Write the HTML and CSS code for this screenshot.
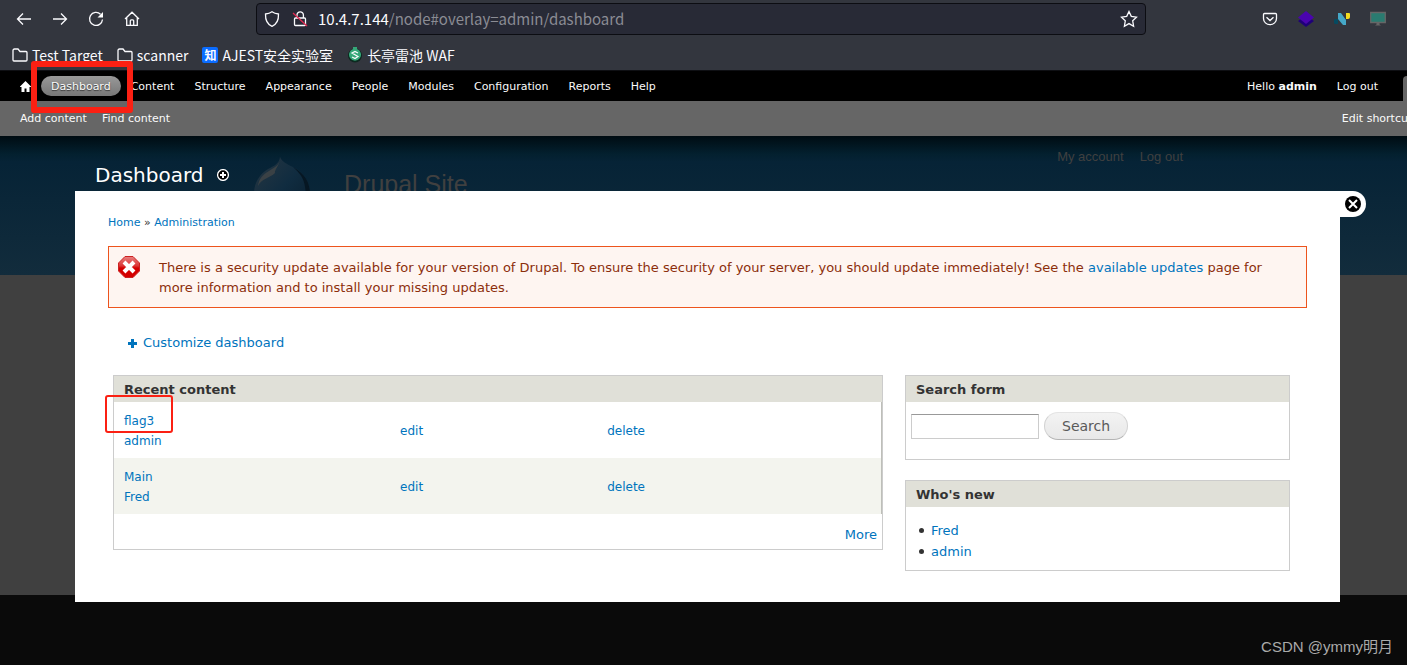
FILE: index.html
```
<!DOCTYPE html>
<html lang="en">
  <head>
    <meta charset="UTF-8" />
    <meta name="viewport" content="width=device-width, initial-scale=1.0" />
    <title>Dashboard | Drupal Site</title>
    <link rel="stylesheet" href="styles.css">
  </head>
  <body>
    <!-- browser -->
    <header class="browser">
      <div class="nav-bar">
        <div class="nav-buttons">
          <button aria-label="Back"><svg width="16" height="16" viewBox="0 0 16 16"><path d="M15 8H1.500M7 2.500L1.500 8l5.500 5.500" /></svg></button>
          <button aria-label="Forward"><svg width="16" height="16" viewBox="0 0 16 16"><path d="M1 8h13.500M9 2.500l5.500 5.500L9 13.500" /></svg></button>
          <button aria-label="Reload"><svg width="16" height="16" viewBox="0 0 16 16"><path d="M12.500 3.200A6.500 6.500 0 1 0 14.500 8.500" /><path class="fill" d="M15 1v5.500H9.500z" /></svg></button>
          <button aria-label="Home"><svg width="16" height="16" viewBox="0 0 16 16"><path d="M1 8l7-6.800L15 8M2.700 6.800v7.500h10.600V6.800M6.300 14V9.800q0-1 1-1h1.400q1 0 1 1V14" /></svg></button>
        </div>
        <div class="url-bar">
          <svg width="16" height="18" viewBox="0 0 16 18"><path d="M8 1.700C6 3.200 3.500 3.800 1.500 4C1.300 9.500 3 14.200 8 16.300C13 14.200 14.700 9.500 14.500 4C12.500 3.800 10 3.200 8 1.700z" /></svg>
          <svg class="lock" width="16" height="18" viewBox="0 0 16 18"><path d="M5 8V5a3.200 3.200 0 0 1 6.400 0v3M3.500 8h9q1 0 1 1v5.500q0 1-1 1h-9q-1 0-1-1V9q0-1 1-1z" /><path class="slash" d="M1 3l14 13" /></svg>
          <div class="url">10.4.7.144<span>/node#overlay=admin/dashboard</span></div>
          <svg width="18" height="18" viewBox="0 0 18 18"><path d="M9 1.500l2.300 4.900 5.200.7-3.800 3.700.9 5.400L9 13.600l-4.600 2.600.9-5.400L1.500 7.100l5.200-.7z" /></svg>
        </div>
        <div class="extensions">
          <svg width="16" height="16" viewBox="0 0 16 16"><path d="M2.500 2.500h11q1 0 1 1V7.500a6.500 6.200 0 0 1-13 0V3.500Q1.500 2.500 2.500 2.500zM4.500 6.200L8 9.500l3.500-3.300" /></svg>
          <svg width="16" height="16" viewBox="0 0 16 16"><path fill="#1f0078" stroke="none" d="M0 10l8 6 8-6-3-2H3z" /><path fill="#4a04ae" stroke="none" d="M8 0l8 6.500L8 13 0 6.500z" /></svg>
          <svg width="16" height="14" viewBox="0 0 16 14"><path fill="#064a60" stroke="none" d="M1 7h3v5H1.500Q0 12 0 10.500V8q0-1 1-1z" /><path fill="#45a8c8" stroke="none" d="M4 1h3l5 7v5H9L4 7z" /><path fill="#f2dc20" stroke="none" d="M12 1h3q1 0 1 1v3q0 2-2 2h-2z" /></svg>
          <svg width="16" height="16" viewBox="0 0 16 16"><path fill="#2a7b70" stroke="#666" d="M.7 1.500h14.600v10H.7z" /><path fill="#666" stroke="none" d="M6.500 12h3v1.500l1.500 1H5l1.500-1z" /></svg>
        </div>
      </div>
      <nav class="bookmarks">
        <a href="#"><svg width="16" height="16" viewBox="0 0 16 16"><path d="M1 3.500q0-1.500 1.500-1.500H6l2 2.500h6q1 0 1 1V13q0 1-1 1H2q-1 0-1-1z" /></svg>Test Target</a>
        <a href="#"><svg width="16" height="16" viewBox="0 0 16 16"><path d="M1 3.500q0-1.500 1.500-1.500H6l2 2.500h6q1 0 1 1V13q0 1-1 1H2q-1 0-1-1z" /></svg>scanner</a>
        <a href="#"><span class="zhi">知</span>AJEST安全实验室</a>
        <a href="#"><svg width="16" height="16" viewBox="0 0 16 16"><circle cx="8" cy="8.500" r="7" fill="#0d2a20" stroke="none" /><path fill="#35a778" stroke="none" d="M6 0h4v2a6 6 0 1 1-4 0z" /><path stroke-width="1.2" d="M11 6L8 4.500 5 6l6 3.500-3 2L5 10" /></svg>长亭雷池 WAF</a>
      </nav>
    </header>

    <!-- drupal toolbar -->
    <nav class="toolbar">
      <a href="#" class="home" aria-label="Home"><svg width="11" height="11" viewBox="0 0 11 11"><path class="fill" d="M5.500 0L11 5.500V6H9.500v5h-3V7.500h-2V11h-3V6H0v-.5z" /></svg></a>
      <ul class="menu">
        <li><a href="#" class="active">Dashboard</a></li>
        <li><a href="#">Content</a></li>
        <li><a href="#">Structure</a></li>
        <li><a href="#">Appearance</a></li>
        <li><a href="#">People</a></li>
        <li><a href="#">Modules</a></li>
        <li><a href="#">Configuration</a></li>
        <li><a href="#">Reports</a></li>
        <li><a href="#">Help</a></li>
      </ul>
      <ul class="menu user">
        <li><a href="#">Hello <strong>admin</strong></a></li>
        <li><a href="#">Log out</a></li>
      </ul>
      <span class="toggle"></span>
      <span class="mark mark-dashboard"></span>
    </nav>
    <nav class="shortcuts">
      <a href="#">Add content</a>
      <a href="#">Find content</a>
      <a href="#" class="edit-shortcuts">Edit shortcuts</a>
    </nav>

    <main class="stage">
      <!-- site under the overlay -->
      <div class="site">
        <div class="site-header">
          <svg class="drop" width="60" height="66" viewBox="0 0 60 66">
            <defs>
              <linearGradient id="drop" x1="0" y1="0" x2="1" y2="1">
                <stop offset="0" stop-color="#273641" />
                <stop offset=".5" stop-color="#102c40" />
                <stop offset="1" stop-color="#081c2b" />
              </linearGradient>
            </defs>
            <path fill="url(#drop)" stroke="none" d="M27 0C29 5 34 7 40 10C50 15 57 24 57 37C57 54 45 65 29 65C12 65 1 53 1 37C1 25 7 17 15 12C21 9 26 7 27 0z" />
            <path fill="#3a4145" stroke="none" d="M27 1C27 8 22 10 16 14C9 18 6 22 5 29C9 21 17 21 22 16C21 13 27 8 27 1z" />
            <path fill="#061723" stroke="none" d="M40 10C52 17 57 25 57 38H53C52 28 52 20 40 10z" />
          </svg>
          <div class="site-name">Drupal Site</div>
          <div class="site-links">
            <a href="#">My account</a>
            <a href="#">Log out</a>
          </div>
        </div>
        <div class="site-body"></div>
        <div class="site-footer"></div>
      </div>

      <div class="overlay">
        <div class="overlay-title">
          <h1>Dashboard</h1>
          <a href="#" aria-label="Add to shortcuts"><svg width="12" height="12" viewBox="0 0 12 12"><circle cx="6" cy="6" r="5.400" fill="#000" stroke="#fff" /><path stroke="#fff" stroke-width="2" d="M6 3v6M3 6h6" /></svg></a>
        </div>
        <div class="overlay-content">
          <button class="close" aria-label="Close overlay"><svg width="16" height="16" viewBox="0 0 16 16"><circle cx="8" cy="8" r="8" fill="#000" stroke="none" /><path stroke="#fff" stroke-width="2" d="M4 4l8 8M12 4l-8 8" /></svg></button>

          <div class="breadcrumb"><a href="#">Home</a> » <a href="#">Administration</a></div>

          <div class="message">
            <svg width="22" height="22" viewBox="0 0 22 22">
              <defs>
                <linearGradient id="stop" x1="0" y1="0" x2="0" y2="1">
                  <stop offset="0" stop-color="#e88080" />
                  <stop offset=".45" stop-color="#dc3535" />
                  <stop offset=".55" stop-color="#d40000" />
                  <stop offset="1" stop-color="#d40000" />
                </linearGradient>
              </defs>
              <path fill="url(#stop)" stroke="#c22" stroke-width="1" d="M7 .5h8L21.500 7v8L15 21.500H7L.5 15V7z" />
              <path stroke="#fff" stroke-width="4" d="M6 6l10 10M16 6L6 16" />
            </svg>
            <p>There is a security update available for your version of Drupal. To ensure the security of your server, you should update immediately! See the <a href="#">available updates</a> page for more information and to install your missing updates.</p>
          </div>

          <a href="#" class="customize"><svg width="9" height="9" viewBox="0 0 9 9"><path stroke="#0074bd" stroke-width="3" d="M4.500 0v9M0 4.500h9" /></svg>Customize dashboard</a>

          <div class="dashboard">
            <section class="block recent">
              <h2>Recent content</h2>
              <table>
                <tr>
                  <td class="title"><a href="#">flag3</a><br /><a href="#">admin</a></td>
                  <td class="edit"><a href="#">edit</a></td>
                  <td><a href="#">delete</a></td>
                </tr>
                <tr>
                  <td class="title"><a href="#">Main</a><br /><a href="#">Fred</a></td>
                  <td class="edit"><a href="#">edit</a></td>
                  <td><a href="#">delete</a></td>
                </tr>
              </table>
              <div class="more"><a href="#">More</a></div>
              <span class="mark mark-flag"></span>
            </section>
            <div class="side">
              <section class="block">
                <h2>Search form</h2>
                <form class="search">
                  <input type="text" aria-label="Search" />
                  <button type="button">Search</button>
                </form>
              </section>
              <section class="block">
                <h2>Who's new</h2>
                <ul class="users">
                  <li><a href="#">Fred</a></li>
                  <li><a href="#">admin</a></li>
                </ul>
              </section>
            </div>
          </div>
        </div>
      </div>
      <div class="watermark">CSDN @ymmy明月</div>
    </main>
  </body>
</html>
```
FILE: styles.css
```
* {
  margin: 0;
  padding: 0;
  box-sizing: border-box;
}
body {
  display: flex;
  flex-direction: column;
  min-height: 100vh;
  overflow-x: hidden;
  background: #0a0a0a;
  color: #333;
  font-family: "DejaVu Sans", Verdana, sans-serif;
  font-size: 13px;
  line-height: 20px;
}
a {
  color: #0074bd;
  text-decoration: none;
}
ul {
  list-style: none;
}
button {
  border: 0;
  background: none;
  cursor: pointer;
}
svg {
  display: block;
  flex: none;
  fill: none;
  stroke: #fbfbfe;
  stroke-width: 1.3;
}
svg .fill {
  fill: #fff;
  stroke: none;
}

/* browser */
.browser {
  height: 71px;
  border-bottom: 1px solid #0e0f13;
  background: #33363e;
  color: #fbfbfe;
  font-family: "Noto Sans CJK SC", "Noto Sans", sans-serif;
  font-size: 15px;
}
.nav-bar {
  display: flex;
  align-items: center;
  height: 38px;
  padding: 0 21px 0 16px;
}
.nav-buttons {
  display: flex;
  gap: 20px;
  margin-right: 116px;
}
.url-bar {
  flex: 1;
  display: flex;
  align-items: center;
  height: 32px;
  padding: 0 7px;
  border: 1px solid #0c0d12;
  border-radius: 4px;
  background: #282a36;
}
.lock {
  margin: 0 10px 0 12px;
}
.lock .slash {
  stroke: #e22850;
}
.url {
  flex: 1;
}
.url span {
  color: #8b8c94;
}
.extensions {
  display: flex;
  align-items: center;
  gap: 20px;
  margin-left: 116px;
}
.bookmarks {
  display: flex;
  gap: 14px;
  padding: 7px 12px 0;
  font-size: 14px;
}
.bookmarks a {
  display: flex;
  align-items: center;
  gap: 4px;
  color: #fbfbfe;
}
.zhi {
  width: 16px;
  height: 16px;
  border-radius: 2px;
  background: #0a6cff;
  font-size: 12px;
  font-weight: bold;
  line-height: 16px;
  text-align: center;
}

/* toolbar */
.toolbar {
  position: relative;
  display: flex;
  align-items: center;
  height: 30px;
  padding-left: 20px;
  background: #000;
  font-size: 11px;
}
.home {
  margin-right: 10px;
}
.menu {
  display: flex;
}
.menu a {
  display: block;
  padding: 2px 10px 0;
  border-radius: 10px;
  color: #fafafa;
  line-height: 18px;
}
.menu .active {
  background: linear-gradient(#999, #777);
  text-shadow: 0 1px 1px #333;
}
.user {
  margin-left: auto;
}
.toggle {
  align-self: flex-end;
  width: 4px;
  height: 25px;
  margin-left: 15px;
  border-top-left-radius: 4px;
  background: #666;
}
.shortcuts {
  display: flex;
  gap: 15px;
  height: 35px;
  padding: 8px 0 0 20px;
  background: #666;
  font-size: 11px;
  white-space: nowrap;
}
.shortcuts a {
  color: #fafafa;
}
.edit-shortcuts {
  margin: 0 -11px 0 auto;
}

/* red marker boxes */
.mark {
  position: absolute;
  z-index: 2;
  border: 2px solid #fb2013;
  border-radius: 3px;
  pointer-events: none;
}
.mark-dashboard {
  left: 31px;
  top: -10px;
  width: 102px;
  height: 52px;
  border-width: 6px;
}
.mark-flag {
  left: -9px;
  top: 19px;
  width: 68px;
  height: 38px;
}

/* site */
.stage {
  position: relative;
  flex: 1;
}
.site {
  position: absolute;
  inset: 0;
  display: flex;
  flex-direction: column;
}
.site-header {
  display: flex;
  align-items: flex-start;
  height: 139px;
  padding: 0 224px 0 253px;
  background: linear-gradient(#000c12, #03202f 18px, #062336 26px, #122c3c);
  font-family: "Liberation Sans", Arial, sans-serif;
}
.drop {
  margin-top: 21px;
}
.site-name {
  margin: 32px 0 0 31px;
  color: #404040;
  font-size: 25px;
  line-height: 32px;
}
.site-links {
  display: flex;
  gap: 16px;
  margin: 11px 0 0 auto;
}
.site-links a {
  color: #404040;
}
.site-body {
  height: 320px;
  background: #404040;
}
.site-footer {
  flex: 1;
  background: #0a0a0a;
}

/* overlay */
.overlay {
  position: relative;
  padding: 0 67px 0 75px;
}
.overlay-title {
  display: flex;
  align-items: center;
  gap: 13px;
  height: 55px;
  padding: 23px 0 0 20px;
}
.overlay-title h1 {
  color: #fff;
  font-size: 20px;
  font-weight: normal;
}
.overlay-content {
  position: relative;
  padding: 22px 33px 31px;
  background: #fff;
}
.close {
  position: absolute;
  left: 100%;
  top: 0;
  width: 26px;
  height: 26px;
  padding-left: 5px;
  border-radius: 0 13px 13px 0;
  background: #fff;
}
.breadcrumb {
  font-size: 11px;
}
.message {
  display: flex;
  gap: 19px;
  margin-top: 13px;
  padding: 9px 32px 9px 9px;
  border: 1px solid #ed541d;
  background: #fef5f1;
  color: #8c2e0b;
}
.message p {
  padding-top: 2px;
}
.customize {
  display: flex;
  align-items: center;
  gap: 6px;
  width: max-content;
  margin: 25px 0 22px 20px;
}
.dashboard {
  display: grid;
  grid-template-columns: 2fr 1fr;
  align-items: start;
  gap: 22px;
  margin: 0 17px 0 5px;
}
.block {
  position: relative;
  border: 1px solid #ccc;
}
.block h2 {
  height: 26px;
  padding: 4px 10px 2px;
  background: #e0e0d8;
  font-size: 13px;
}
.recent table {
  width: 100%;
  border-right: 1px solid #bebfb9;
  border-collapse: separate;
  border-spacing: 0;
  font-size: 12px;
}
.recent td {
  padding: 9px 10px 7px;
}
.recent .title {
  width: 36%;
}
.recent .edit {
  width: 27%;
}
.recent tr:nth-child(even) {
  background: #f3f4ee;
}
.more {
  padding: 11px 5px 4px;
  text-align: right;
}
.side {
  display: grid;
  gap: 20px;
}
.search {
  display: flex;
  align-items: center;
  gap: 5px;
  padding: 10px 5px 19px;
}
.search input {
  width: 128px;
  height: 25px;
  border: 1px solid #ccc;
  border-top-color: #999;
}
.search button {
  height: 28px;
  padding: 0 17px;
  border: 1px solid #e4e4e4;
  border-bottom-color: #b4b4b4;
  border-left-color: #d2d2d2;
  border-right-color: #d2d2d2;
  border-radius: 14px;
  background: linear-gradient(#f3f3f3, #e8e8e8);
  color: #5a5a5a;
  font-family: inherit;
  font-size: 14px;
}
.users {
  padding: 13px 13px 8px;
}
.users li {
  display: flex;
  align-items: center;
  gap: 7px;
  line-height: 21px;
}
.users li::before {
  content: "";
  width: 5px;
  height: 5px;
  border-radius: 50%;
  background: #333;
}
.watermark {
  position: absolute;
  right: 14px;
  bottom: 8px;
  color: #aaa;
  font-family: "Liberation Sans", "Noto Sans CJK SC", sans-serif;
  font-size: 15px;
}
```
